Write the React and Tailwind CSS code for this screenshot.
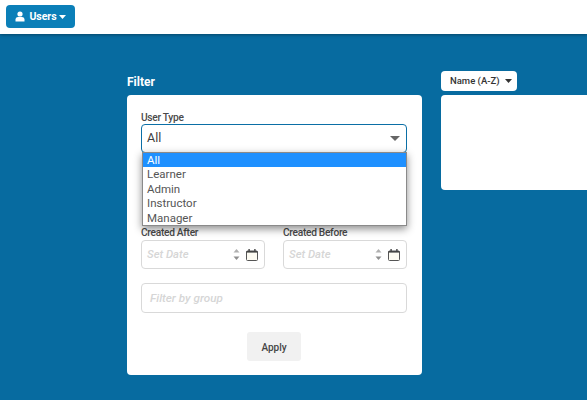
import React from "react";

const Steppers = () => (
  <svg width="7" height="13" viewBox="0 0 7 13" className="shrink-0">
    <path d="M3.5 1 L6.5 4.5 H0.5 Z" fill="#b0b0b0" />
    <path d="M3.5 12 L0.5 8.5 H6.5 Z" fill="#8f8f8f" />
  </svg>
);

const Calendar = () => (
  <svg width="12" height="12" viewBox="0 0 12 12" className="shrink-0">
    <rect x="0.5" y="2" width="11" height="9.5" rx="1" fill="#fdfbf2" stroke="#555" strokeWidth="1" />
    <rect x="0.5" y="2" width="11" height="1.6" fill="#444" />
    <rect x="2.4" y="0" width="1.4" height="2.6" fill="#444" />
    <rect x="8.2" y="0" width="1.4" height="2.6" fill="#444" />
  </svg>
);

const DateField = ({ label }) => (
  <div className="w-[124px]">
    <div className="h-[15px] text-[10.2px] tracking-[-0.3px] leading-[16px] font-medium text-[#4a4a4a]">{label}</div>
    <div className="h-[29px] rounded-[4px] border border-[#d9d9d9] flex items-center pl-[5px] pr-[6px] bg-white">
      <span className="flex-1 pt-[2px] text-[11.3px] italic font-medium text-[#d6d6d6]">Set Date</span>
      <span className="mr-[6px] flex"><Steppers /></span>
      <span className="flex"><Calendar /></span>
    </div>
  </div>
);

export default function App() {
  const options = ["All", "Learner", "Admin", "Instructor", "Manager"];
  return (
    <div className="w-[587px] h-[400px] overflow-hidden bg-[#076ba0] font-['Roboto',sans-serif] flex flex-col">
      <header className="h-[34px] shrink-0 bg-white shadow-[0_1px_3px_rgba(0,0,0,0.35)] pl-[6px] pt-[5px]">
        <button className="w-[69px] h-[23px] rounded-[4px] bg-[#0b7fb8] text-white text-[10.5px] font-bold flex items-center justify-center">
          <svg width="10" height="11" viewBox="0 0 10 11" className="mr-[4px]">
            <circle cx="5" cy="3" r="2.6" fill="#fff" />
            <path d="M0.5 10.5 V8.5 C0.5 6.8 2 6 3 6 H7 C8 6 9.5 6.8 9.5 8.5 V10.5 Z" fill="#fff" />
          </svg>
          <span>Users</span>
          <svg width="7" height="4" viewBox="0 0 7 4" className="ml-[2px]"><path d="M0 0 H7 L3.5 4 Z" fill="#fff" /></svg>
        </button>
      </header>

      <main className="flex pl-[127px] pt-[37px] gap-[19px]">
        <section className="w-[295px] shrink-0">
          <h2 className="h-[24px] text-[12px] leading-[22px] font-bold text-white">Filter</h2>
          <div className="h-[280px] rounded-[4px] bg-white pt-[15px] pl-[14px] pr-[15px] flex flex-col">
            <div className="relative">
              <div className="h-[14px] text-[10.2px] tracking-[-0.3px] leading-[15px] font-medium text-[#4a4a4a]">User Type</div>
              <div className="h-[29px] rounded-[4px] border-[1.5px] border-[#0b6fa6] flex items-center pl-[5px] pr-[6px] text-[12.5px] text-[#3d3d3d]">
                <span className="flex-1">All</span>
                <svg width="10" height="5" viewBox="0 0 10 5"><path d="M0 0 H10 L5 5 Z" fill="#666" /></svg>
              </div>
              <ul className="absolute left-[1px] right-0 top-[42px] bg-white border border-[#8a8a8a] shadow-[0_3px_8px_rgba(0,0,0,0.45)] text-[11.5px] leading-[14.4px] text-[#555] z-10">
                {options.map((o, i) => (
                  <li key={o} className={i === 0 ? "pl-[4px] bg-[#1e90ff] text-white" : "pl-[4px]"}>{o}</li>
                ))}
              </ul>
            </div>
            <div className="flex justify-between mt-[72px]">
              <DateField label="Created After" />
              <DateField label="Created Before" />
            </div>
            <div className="mt-[14px] h-[30px] rounded-[4px] border border-[#d9d9d9] flex items-center pl-[8px] pt-[1px] text-[11.7px] italic font-medium text-[#d6d6d6]">
              Filter by group
            </div>
            <button className="mt-[19px] self-center w-[54px] h-[29px] rounded-[3px] bg-[#f1f1f1] pt-[1px] text-[10px] font-medium text-[#444]">
              Apply
            </button>
          </div>
        </section>

        <section className="flex-1">
          <button className="h-[20px] w-[76px] rounded-[4px] bg-white text-[9.5px] font-medium text-[#333] flex items-center pl-[9px]">
            <span>Name (A-Z)</span>
            <svg width="7" height="4" viewBox="0 0 7 4" className="ml-[6px]"><path d="M0 0 H7 L3.5 4 Z" fill="#333" /></svg>
          </button>
          <div className="mt-[4px] h-[95px] rounded-l-[4px] bg-white"></div>
        </section>
      </main>
    </div>
  );
}
